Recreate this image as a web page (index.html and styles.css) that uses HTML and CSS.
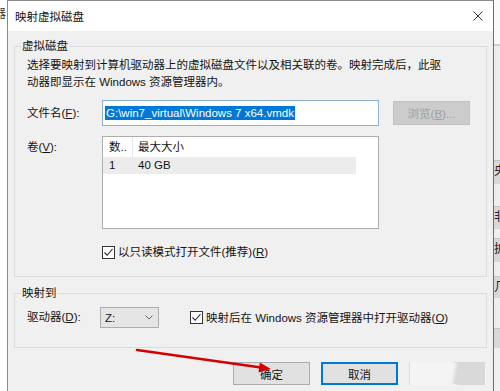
FILE: index.html
```html
<!DOCTYPE html>
<html lang="zh-CN">

<head>
    <meta charset="UTF-8" />
    <title>映射虚拟磁盘</title>
    <link rel="stylesheet" href="styles.css">
</head>

<body>
    <div class="screen">
        <div class="behind-left"><span class="peek">器</span></div>

        <div class="dialog">
            <div class="titlebar">
                <span class="title">映射虚拟磁盘</span>
                <svg class="close" width="10" height="10" viewBox="0 0 10 10">
                    <path d="M0.5 0.5 L9.5 9.5 M9.5 0.5 L0.5 9.5" stroke="#333" stroke-width="1" fill="none" />
                </svg>
            </div>

            <div class="dialog-body">
                <fieldset class="group group-disk">
                    <legend>虚拟磁盘</legend>
                    <p class="desc">选择要映射到计算机驱动器上的虚拟磁盘文件以及相关联的卷。映射完成后，此驱<br>动器即显示在 Windows 资源管理器内。</p>

                    <div class="form-row">
                        <label class="field-label">文件名(<u>F</u>):</label>
                        <div class="textbox"><span class="selected">G:\win7_virtual\Windows 7 x64.vmdk</span></div>
                        <button class="btn btn-disabled">浏览(<u>B</u>)...</button>
                    </div>

                    <div class="form-row row-volumes">
                        <label class="field-label">卷(<u>V</u>):</label>
                        <div class="listview">
                            <div class="lv-head">
                                <span class="col-num">数..</span>
                                <span class="col-size">最大大小</span>
                            </div>
                            <div class="lv-item">
                                <span class="col-num">1</span>
                                <span class="col-size">40 GB</span>
                            </div>
                        </div>
                    </div>

                    <label class="check check-readonly">
                        <span class="checkbox">
                            <svg width="11" height="11" viewBox="0 0 11 11">
                                <path d="M1.5 5.5 L4.2 8.3 L9.5 2" stroke="#222" stroke-width="1.1" fill="none" />
                            </svg>
                        </span>
                        <span>以只读模式打开文件(推荐)(<u>R</u>)</span>
                    </label>
                </fieldset>

                <fieldset class="group group-map">
                    <legend>映射到</legend>
                    <div class="map-row">
                        <label class="field-label">驱动器(<u>D</u>):</label>
                        <div class="combo">
                            <span>Z:</span>
                            <svg width="8" height="5" viewBox="0 0 8 5">
                                <path d="M0.5 0.5 L4 4 L7.5 0.5" stroke="#666" stroke-width="1" fill="none" />
                            </svg>
                        </div>
                        <label class="check check-open">
                            <span class="checkbox">
                                <svg width="11" height="11" viewBox="0 0 11 11">
                                    <path d="M1.5 5.5 L4.2 8.3 L9.5 2" stroke="#222" stroke-width="1.1" fill="none" />
                                </svg>
                            </span>
                            <span>映射后在 Windows 资源管理器中打开驱动器(<u>O</u>)</span>
                        </label>
                    </div>
                </fieldset>

                <div class="actions">
                    <button class="btn">确定</button>
                    <button class="btn btn-default">取消</button>
                    <button class="btn btn-faded"></button>
                </div>
            </div>
        </div>

        <div class="behind-right">
            <div class="cell cell-top"></div>
            <div class="cell cell-light" style="height: 114px"></div>
            <div class="cell cell-dark" style="height: 24px">央</div>
            <div class="cell cell-light" style="height: 22px"></div>
            <div class="cell cell-dark" style="height: 23px">非</div>
            <div class="cell cell-light" style="height: 9px"></div>
            <div class="cell cell-dark" style="height: 24px">扩</div>
            <div class="cell cell-light" style="height: 14px"></div>
            <div class="cell cell-dark" style="height: 22px">几</div>
            <div class="cell cell-light" style="height: 30px"></div>
            <div class="cell cell-dark" style="height: 20px"></div>
        </div>
    </div>

    <!-- red annotation arrow drawn over the dialog -->
    <svg class="arrow" width="500" height="391" viewBox="0 0 500 391">
        <path d="M137 350 L261 367.5" stroke="#d20000" stroke-width="2.5" fill="none" stroke-linecap="round" />
        <path d="M271 369 L258.5 372.5 L259.8 362.5 Z" fill="#d20000" />
    </svg>
</body>

</html>
```

FILE: styles.css
```css
* {
    margin: 0;
    padding: 0;
    box-sizing: border-box;
}

body {
    width: 500px;
    height: 391px;
    overflow: hidden;
    position: relative;
    background: #fff;
    font-family: "Liberation Sans", "Noto Sans CJK SC", sans-serif;
    font-size: 11.5px;
    color: #141414;
}

.screen {
    display: flex;
    height: 391px;
}

/* windows peeking out behind the dialog */
.behind-left {
    width: 7px;
    flex-shrink: 0;
    background: #fff;
    overflow: hidden;
}

.peek {
    display: block;
    margin: 6px 0 0 -6px;
    font-size: 12px;
    line-height: 16px;
    color: #333;
}

.behind-right {
    width: 6px;
    flex-shrink: 0;
    overflow: hidden;
    background: #f0f0f0;
    display: flex;
    flex-direction: column;
}

.cell {
    flex-shrink: 0;
    font-size: 12px;
    line-height: 20px;
    color: #222;
    white-space: nowrap;
}

.cell-top {
    height: 46px;
    background: #fafafa;
    border-bottom: 2px solid #d0d0d0;
}

.cell-light {
    background: #eeeeee;
}

.cell-dark {
    background: #d8d8d8;
    border-top: 1px solid #c4c4c4;
}

/* dialog */
.dialog {
    width: 487px;
    flex-shrink: 0;
    border: 1px solid #8a8a8a;
    border-right-color: #6c6c6c;
    border-bottom: none;
    background: #f0f0f0;
    display: flex;
    flex-direction: column;
}

.titlebar {
    height: 30px;
    flex-shrink: 0;
    background: #fff;
    display: flex;
    align-items: center;
    justify-content: space-between;
    padding: 0 10px 0 7px;
}

.title {
    font-size: 11.5px;
    color: #111;
}

.dialog-body {
    padding: 8px 6px 0;
}

.group {
    border: 1px solid #dcdcdc;
    padding: 4px 12px 16px;
    min-width: 0;
}

.group legend {
    margin-left: -6px;
    padding: 0 1px;
    line-height: 14px;
}

.desc {
    line-height: 17px;
}

.form-row {
    display: flex;
    align-items: center;
    margin-top: 9px;
}

.row-volumes {
    align-items: flex-start;
    margin-top: 10px;
}

.row-volumes .field-label {
    margin-top: 3px;
}

.field-label {
    width: 75px;
    flex-shrink: 0;
    line-height: 17px;
}

.textbox {
    width: 277px;
    height: 26px;
    border: 1px solid #8eaed2;
    background: #fff;
    padding: 0 2px;
    display: flex;
    align-items: center;
    white-space: nowrap;
}

.selected {
    background: #0078d7;
    color: #fff;
    line-height: 14px;
    padding: 0 1px;
}

.btn {
    width: 77px;
    height: 23px;
    border: 1px solid #adadad;
    background: #e1e1e1;
    font: inherit;
    color: #141414;
    flex-shrink: 0;
}

.btn-disabled {
    height: 24px;
    margin-left: 14px;
    background: #cccccc;
    border-color: #c2c2c2;
    color: #a0a0a0;
}

.btn-default {
    border: 2px solid #0078d7;
}

.btn-faded {
    border-color: transparent;
    background: linear-gradient(100deg, #f4f4f4 0 56%, #d9d9d9 62%);
}

/* list view */
.listview {
    width: 277px;
    height: 93px;
    border: 1px solid #adadad;
    background: #fff;
}

.lv-head,
.lv-item {
    display: flex;
    width: 253px;
}

.lv-head {
    height: 20px;
    line-height: 20px;
}

.lv-item {
    height: 17px;
    line-height: 17px;
    background: #ececec;
}

.col-num {
    width: 30px;
    padding-left: 6px;
    white-space: nowrap;
}

.lv-head .col-num {
    border-right: 1px solid #e5e5e5;
}

.col-size {
    padding-left: 5px;
}

/* checkboxes */
.check {
    display: flex;
    align-items: center;
    gap: 3px;
    line-height: 16px;
    white-space: nowrap;
}

.checkbox {
    width: 13px;
    height: 13px;
    border: 1px solid #333;
    background: #fff;
    display: flex;
    align-items: center;
    justify-content: center;
}

.check-readonly {
    margin: 15px 0 0 75px;
}

/* second group */
.group-map {
    margin-top: 9px;
    padding: 7px 12px 19px;
}

.map-row {
    display: flex;
    align-items: center;
    height: 21px;
}

.map-row .field-label {
    width: 73px;
}

.combo {
    width: 59px;
    height: 21px;
    flex-shrink: 0;
    border: 1px solid #adadad;
    background: #e5e5e5;
    display: flex;
    align-items: center;
    justify-content: space-between;
    padding: 0 5px 0 4px;
}

.check-open {
    margin-left: 31px;
}

.actions {
    display: flex;
    justify-content: flex-end;
    gap: 11px;
    padding-right: 1px;
    margin-top: 14px;
}

.arrow {
    position: absolute;
    top: 0;
    left: 0;
    pointer-events: none;
}
```
